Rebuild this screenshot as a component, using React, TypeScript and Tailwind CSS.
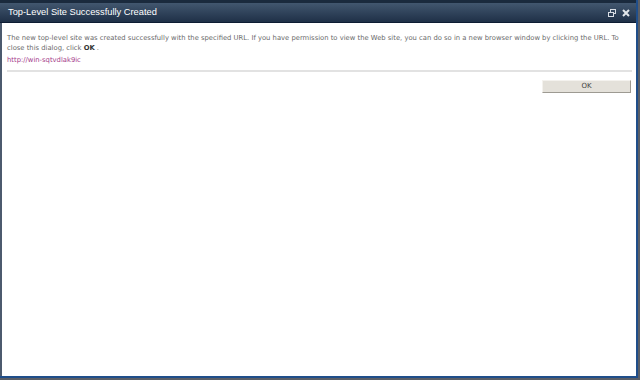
import React from "react";

export default function App() {
  return (
    <div className="w-[640px] h-[380px] bg-[#5a5e66] overflow-hidden" style={{ fontFamily: "Verdana, 'DejaVu Sans', sans-serif" }}>
      <div className="w-[638px] h-[378px] flex flex-col bg-[#1f4e8a] pb-[2px] pr-[2px]">
        <div className="h-[3px] bg-[#1a2a3d]" />
        <div className="h-[20px] flex items-center justify-between pl-[8px] pr-[6px] border-b border-[#0d1c33] bg-gradient-to-b from-[#42576f] to-[#1f3047]">
          <span className="text-[9.3px] text-white" style={{ fontFamily: "'Liberation Sans', Arial, sans-serif" }}>Top-Level Site Successfully Created</span>
          <div className="flex items-center gap-[6px]">
            <svg width="8" height="8" viewBox="0 0 8 8" fill="none">
              <rect x="2.5" y="0.5" width="5" height="4" stroke="#d8dde4" />
              <rect x="0.5" y="3.5" width="5" height="4" fill="#2b3d55" stroke="#d8dde4" />
            </svg>
            <svg width="8" height="8" viewBox="0 0 8 8">
              <path d="M1 1 L7 7 M7 1 L1 7" stroke="#e2e6ea" strokeWidth="2" />
            </svg>
          </div>
        </div>
        <div className="flex-1 flex">
          <div className="w-[2px] bg-[#4c5a6e]" />
          <div className="flex-1 bg-white pl-[5px] pr-[4px] pt-[10px]">
            <p className="text-[6.8px] leading-[10px] text-[#6a6a6a] pr-[4px]">
              The new top-level site was created successfully with the specified URL. If you have permission to view the Web site, you can do so in a new browser window by clicking the URL. To close this dialog, click <b className="text-[#333]">OK</b> .
            </p>
            <a className="block mt-[2px] text-[6.8px] leading-[10px] text-[#a63b8b]">http://win-sqtvdlak9ic</a>
            <div className="mt-[5px] h-[2px] bg-[#e2e2e2]" />
            <div className="flex justify-end mt-[8px] pr-[1px]">
              <div className="w-[89px] h-[13px] flex items-center justify-center bg-[#e4e1da] border border-[#9d9a92] border-t-[#f4f2ee] border-l-[#f4f2ee] text-[7px] text-[#444]">OK</div>
            </div>
          </div>
        </div>
      </div>
    </div>
  );
}
